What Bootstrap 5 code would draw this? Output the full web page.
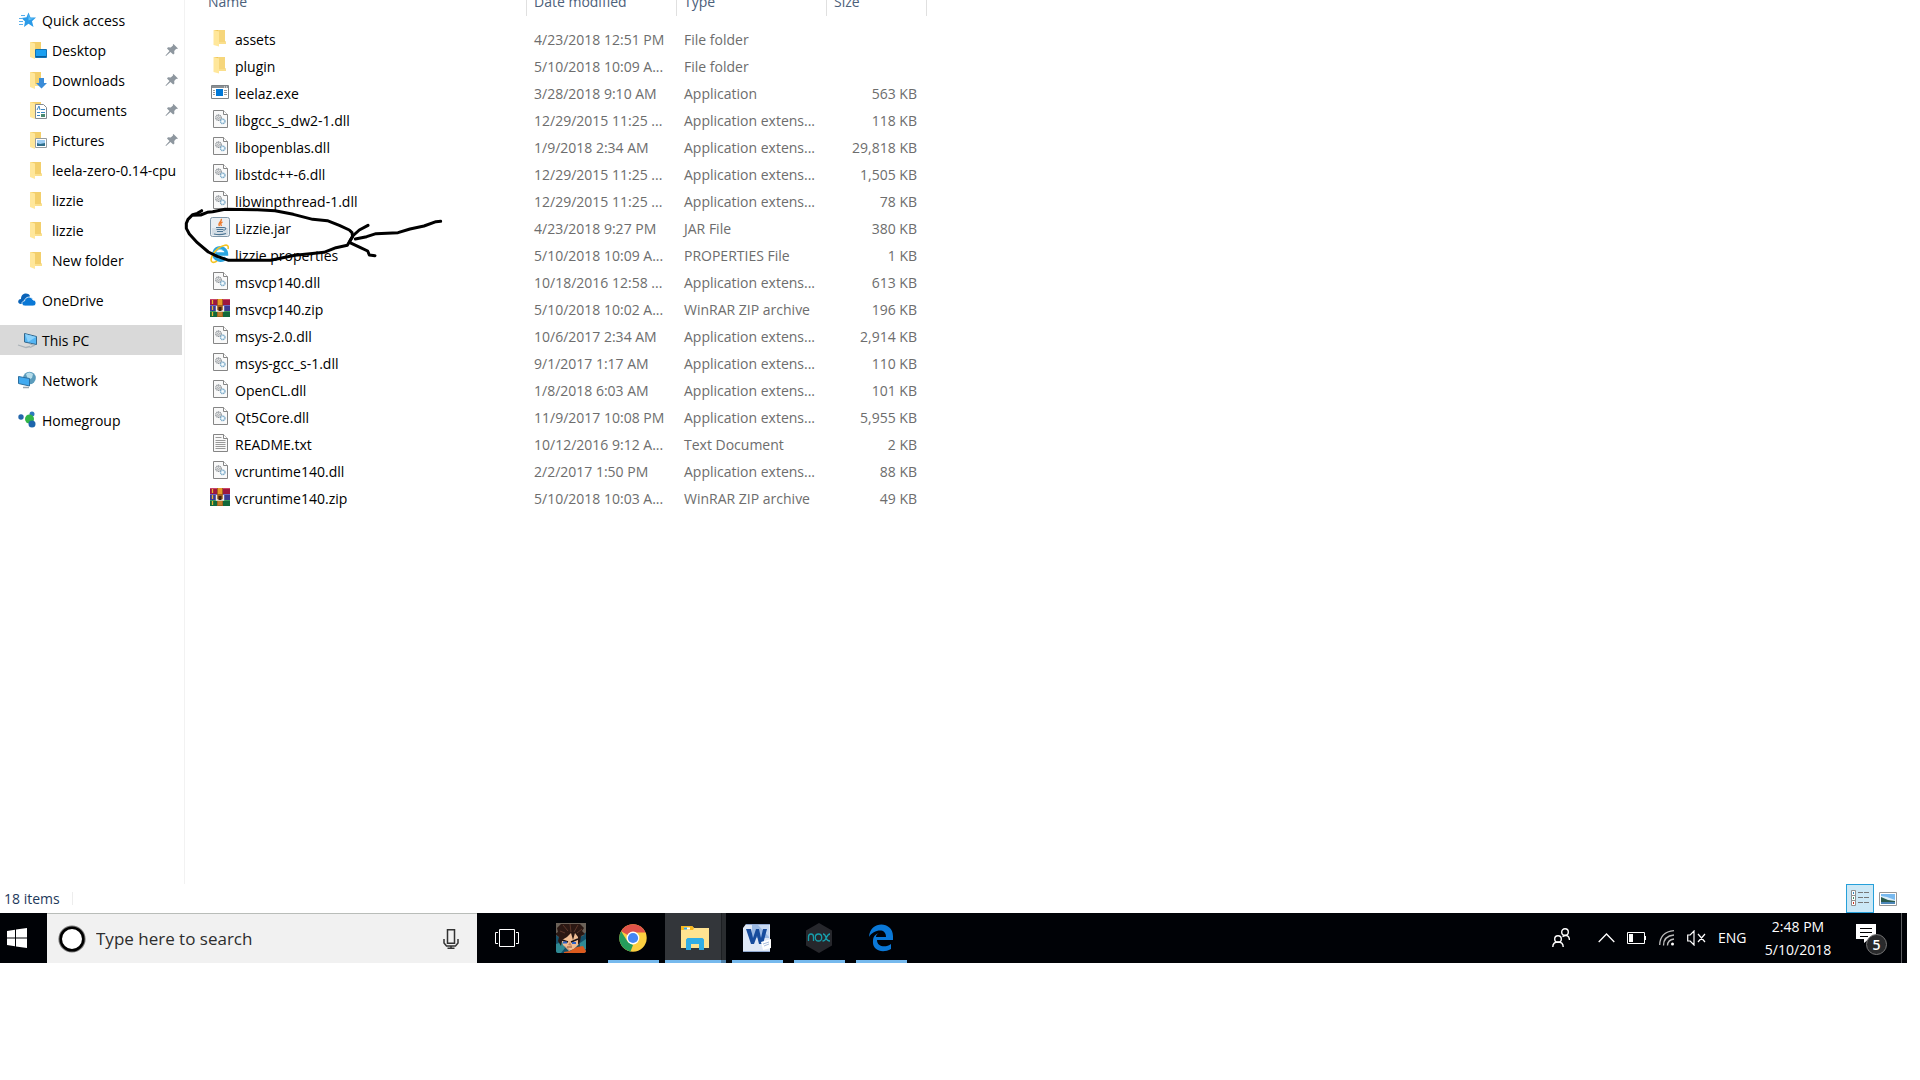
<!DOCTYPE html>
<html lang="en">
<head>
<meta charset="utf-8">
<meta name="viewport" content="width=device-width, initial-scale=1">
<title>File Explorer</title>
<link href="https://cdn.jsdelivr.net/npm/bootstrap@5.3.0/dist/css/bootstrap.min.css" rel="stylesheet">
<style>
  body { font-family: "Open Sans", "Noto Sans", sans-serif; font-size: 14px; line-height: 20px; color: #000; background: #fff; }
  .desktop { min-height: 100vh; padding: 0 13px 117px 0; }
  .side { width: 185px; padding-top: 5px; border-right: 1px solid #f2f2f2; }
  .side-link { height: 30px; width: 182px; padding-left: 18px; gap: 6px; color: #000; text-decoration: none; white-space: nowrap; overflow: hidden; }
  .side-link span { padding-top: 2px; }
  .side-link.nested { padding-left: 29px; gap: 5px; }
  .side-link.picked { background: #d9d9d9; }
  .side-group { margin-top: 10px; }
  .ic18 { width: 18px; height: 18px; flex: none; }
  .ic20 { width: 20px; height: 20px; flex: none; margin-bottom: 4px; }
  .pin { width: 14px; height: 14px; margin-left: auto; margin-right: 3px; flex: none; }
  .files { table-layout: fixed; width: 742px; border-collapse: separate; border-spacing: 0; }
  .files th { padding: 0; font-weight: 400; color: #4c607a; border-right: 1px solid #e0e0e0; }
  .head-text { height: 16px; overflow: hidden; padding: 0 0 4px 7px; }
  .c-name .head-text { padding-left: 23px; }
  .files tbody::before { content: ""; display: block; height: 10px; }
  .files td { height: 27px; padding: 0 0 0 7px; color: #6d6d6d; white-space: nowrap; }
  .files td:first-child { padding-left: 25px; color: #000; }
  .files td:last-child { padding-right: 10px; text-align: right; }
  .file-name { gap: 5px; }
  .c-name { width: 342px; } .c-mid { width: 150px; } .c-size { width: 100px; }
  .ink { position: absolute; left: 180px; top: 190px; width: 280px; height: 80px; pointer-events: none; }
  .status { height: 29px; padding: 0 5px 0 4px; color: #1e395b; }
  .status-rule { width: 1px; height: 13px; margin-left: 12px; background: #ededed; }
  .view-btn { width: 28px; height: 29px; padding: 0; border: 1px solid transparent; background: none; display: flex; align-items: center; justify-content: center; }
  .view-btn.on { background: #cce8f6; border-color: #26a0da; }
  .taskbar { height: 50px; background: #000206; color: #fff; }
  .tb { height: 50px; width: 62px; padding: 0; border: 0; background: none; color: #fff; display: flex; align-items: center; justify-content: center; flex: none; }
  .tb-start { width: 47px; padding-right: 13px; }
  .tb-view { width: 63px; padding-right: 3px; }
  .running { position: relative; }
  .running::after { content: ""; position: absolute; left: 6px; right: 5px; bottom: 0; height: 3px; background: #76b9ed; }
  .active-app { background: linear-gradient(90deg, transparent 0 1px, #33363a 1px 57px, #1c1f22 57px 58px, #2a2d30 58px); }
  .active-app::after { left: 1px; right: 0; background: linear-gradient(90deg, #76b9ed 0 56px, #4f82ab 56px); }
  .searchbox { width: 430px; height: 50px; background: #f1f1f1; border-top: 1px solid #b9bdb9; padding: 0 18px 0 11px; }
  .searchbox input { border: 0; background: none; outline: 0; font-size: 17px; line-height: 24px; padding: 0; margin-left: 10px; color: #222; }
  .searchbox input::placeholder { color: #2d2d2d; opacity: 1; }
  .mic { border: 0; background: none; padding: 0; display: flex; }
  .tray { gap: 12px; }
  .tray-btn { border: 0; background: none; padding: 0; color: #fff; display: flex; align-items: center; }
  .lang { width: 30px; }
  .clock { width: 76px; font-size: 14px; line-height: 23px; text-align: center; display: block; }
  .note { position: relative; width: 32px; height: 32px; margin-right: 13px; }
  .note-icon { position: absolute; left: 0; top: 2px; }
  .note-count { position: absolute; left: 10px; top: 12px; width: 21px; height: 21px; border-radius: 50%; border: 1px solid #777; background: #292a2c; font-size: 14px; font-weight: 600; line-height: 19px; text-align: center; }
  .peek { width: 6px; height: 50px; border: 0; border-left: 1px solid #5b5d60; background: none; padding: 0; }
</style>
<script src="https://cdn.jsdelivr.net/npm/bootstrap@5.3.0/dist/js/bootstrap.bundle.min.js"></script>
</head>
<body>
<svg width="0" height="0" class="position-absolute" aria-hidden="true">
  <symbol id="folder" viewBox="0 0 20 20"><path d="M4 2h11v11l1 1v2H7z" fill="#f0c75c"/><path d="M8 2h7v12h-7z" fill="#f6d67b"/><path d="M3.500 2L9 3.500V18.500L3.500 17z" fill="#ffe79b"/><path d="M9 14h7v2H9z" fill="#fadf8d"/></symbol>
  <symbol id="sfolder" viewBox="0 0 18 18"><path d="M1 1h11v11l1 1v2H5z" fill="#f3cf6c"/><path d="M1 1l5 1.500V18l-5-2z" fill="#ffe79b"/><path d="M6 13h7v2H6z" fill="#fadf8d"/></symbol>
  <symbol id="dll" viewBox="0 0 20 20"><path d="M3.500 1.500h10l4 4v13h-14z" fill="#f9f9f9" stroke="#858585"/><path d="M13.500 1.500v4h4" fill="#fff" stroke="#858585"/><circle cx="8.500" cy="8.700" r="2.700" fill="#eee" stroke="#8b9196" stroke-width="1.300" stroke-dasharray="1.200 .5"/><circle cx="8.500" cy="8.700" r="1" fill="none" stroke="#8b9196" stroke-width=".7"/><circle cx="12.700" cy="12.300" r="2.300" fill="#e3f1f9" stroke="#7aa7c5" stroke-width="1.300" stroke-dasharray="1.200 .5"/><circle cx="12.700" cy="12.300" r=".8" fill="#fff"/></symbol>
  <symbol id="txt" viewBox="0 0 20 20"><path d="M3.500 1.500h10l4 4v13h-14z" fill="#f9f9f9" stroke="#858585"/><path d="M13.500 1.500v4h4" fill="#fff" stroke="#858585"/><path d="M5.500 4.500h6M5.500 7.500h10M5.500 9.500h10M5.500 11.500h10M5.500 13.500h10M5.500 15.500h10" stroke="#999"/></symbol>
  <symbol id="exe" viewBox="0 0 20 20"><path d="M1.500 3.500h17v13h-17z" fill="#fff" stroke="#7d8286"/><path d="M2 4h16v2H2z" fill="#8b9094"/><path d="M14 5h1M16 5h1" stroke="#fff"/><path d="M3 8.500h2M3 10.500h2M3 12.500h2M14 8.500h3M14 10.500h3M14 12.500h3" stroke="#9a9a9a"/><path d="M6 7h7v7H6z" fill="#0078d7"/></symbol>
  <symbol id="jar" viewBox="0 0 20 20"><rect x=".5" y=".5" width="19" height="19" rx="2" fill="#e9eef2" stroke="#8097a9"/><path d="M2 11h16v7H2z" fill="#d3dde5"/><path d="M11 2c2 2-4 3.500-1.500 7M12.500 5c-2.500 1-2 2-1 4" fill="none" stroke="#ee7a2b" stroke-width="1.400"/><path d="M6 10.500h8M6.500 12.500h7M7 14.500h6M4 17q6 1.500 12-.5" fill="none" stroke="#4d7694" stroke-width="1.200"/><path d="M14 10.500q3 0 1.500 2l-2 1" fill="none" stroke="#4d7694"/></symbol>
  <symbol id="ie" viewBox="0 0 20 20"><path d="M15.500 13.500A6.300 6.300 0 1 1 16.500 10H6" fill="none" stroke="#2aa5e0" stroke-width="3.400"/><path d="M7 6.500q3-3 6 0" fill="none" stroke="#88d9f8"/><path d="M2 18C-1 15 5 4 14 1.500c3-1 5 0 4 3.500" fill="none" stroke="#f5c324" stroke-width="1.600"/><path d="M2 18q2 1 5-1" fill="none" stroke="#f5c324" stroke-width="1.600"/></symbol>
  <symbol id="rar" viewBox="0 0 20 20"><path d="M0 1h20v6H0z" fill="#9d1740"/><path d="M0 1h20v1H0z" fill="#c94467"/><path d="M0 7h20v6H0z" fill="#3b3a93"/><path d="M0 7h20v1H0z" fill="#6c66c0"/><path d="M0 13h20v6H0z" fill="#12683a"/><path d="M0 13h20v1H0z" fill="#3d9c5d"/><path d="M2.500 2v4M2.500 8v4M2.500 14v4" stroke="#e8b62f" stroke-width="1.300"/><path d="M7 1h6v18H7z" fill="#a3601f"/><path d="M8 1h4v6H8z" fill="#e99b28"/><path d="M6.500 8v5h7V8" fill="none" stroke="#eee" stroke-width="1.400"/><path d="M8.500 9h3v4h-3z" fill="#3a2115"/><path d="M8 15h4M8 17h4" stroke="#dd9c3b"/></symbol>
  <symbol id="pin" viewBox="0 0 14 14"><path d="M8.500 1l4.500 4.500-1.200.5-.6-.2-2 2.200.2 2.500-1.200 1L5.500 9 1 13l-.5-.5L4.500 8 2 5.500l1-1.200 2.700.2L8 2.500 7.800 1.800z" fill="#8e979f"/></symbol>
</svg>

<div class="desktop d-flex flex-column position-relative">
  <div class="d-flex flex-grow-1 align-items-stretch">
    <nav class="side flex-shrink-0" aria-label="Folders">
      <a href="#" class="side-link d-flex align-items-center"><svg class="ic18" viewBox="0 0 18 18"><path d="M10.500 1.500l2 5H18l-4 3.800 1.500 5.700-5-3.200L6 16l1-5.500L3.500 7l5-.8z" fill="#2b9be8"/><path d="M10.500 3l1.500 4.200 4 .3-5.500 2z" fill="#62c1f7"/><path d="M3 4.500h4M1 7.500h4M1 10.500h4M1 13.500h4" stroke="#58aeea"/></svg><span>Quick access</span></a>
      <a href="#" class="side-link nested d-flex align-items-center"><svg class="ic18" viewBox="0 0 18 18"><use href="#sfolder"/><path d="M6.500 8.500h11v8h-11z" fill="#1a9ff1" stroke="#1273b5"/><path d="M7 15h10v1H7z" fill="#0c5c99"/></svg><span>Desktop</span><svg class="pin"><use href="#pin"/></svg></a>
      <a href="#" class="side-link nested d-flex align-items-center"><svg class="ic18" viewBox="0 0 18 18"><use href="#sfolder"/><path d="M10 7h5v5h3l-5.500 5.500L7 12h3z" fill="#3a8cd8"/></svg><span>Downloads</span><svg class="pin"><use href="#pin"/></svg></a>
      <a href="#" class="side-link nested d-flex align-items-center"><svg class="ic18" viewBox="0 0 18 18"><use href="#sfolder"/><path d="M6.500 3.500h8l3 3v11h-11z" fill="#fff" stroke="#848a8f"/><path d="M8 9l2-4 1 4M12 8.500h4M8 11.500h3M12 11.500h4M8 14.500h3" fill="none" stroke="#3b86c2"/><path d="M12 13h4v3h-4z" fill="#4a8a70"/></svg><span>Documents</span><svg class="pin"><use href="#pin"/></svg></a>
      <a href="#" class="side-link nested d-flex align-items-center"><svg class="ic18" viewBox="0 0 18 18"><use href="#sfolder"/><path d="M6.500 7.500h11v9h-11z" fill="#fff" stroke="#969ca0"/><path d="M8 9h8v6H8z" fill="#9cccf3"/><path d="M8 12l3 1 5-1v3H8z" fill="#316f8b"/></svg><span>Pictures</span><svg class="pin"><use href="#pin"/></svg></a>
      <a href="#" class="side-link nested d-flex align-items-center"><svg class="ic18"><use href="#sfolder"/></svg><span>leela-zero-0.14-cpu</span></a>
      <a href="#" class="side-link nested d-flex align-items-center"><svg class="ic18"><use href="#sfolder"/></svg><span>lizzie</span></a>
      <a href="#" class="side-link nested d-flex align-items-center"><svg class="ic18"><use href="#sfolder"/></svg><span>lizzie</span></a>
      <a href="#" class="side-link nested d-flex align-items-center"><svg class="ic18"><use href="#sfolder"/></svg><span>New folder</span></a>
      <a href="#" class="side-link side-group d-flex align-items-center"><svg class="ic18" viewBox="0 0 18 18"><path d="M3 13C-1 13-.5 8 3 8c0-6 7-7 9-3L7 13z" fill="#0a63b8"/><path d="M7 15c-4 0-4-5-.5-5 .5-4.500 7-5.500 8.500-1 4 0 4 6 0 6z" fill="#0a78d6" stroke="#fff" stroke-width=".8"/></svg><span>OneDrive</span></a>
      <a href="#" class="side-link side-group picked d-flex align-items-center"><svg class="ic18" viewBox="0 0 18 18" overflow="visible"><path d="M6.500 2.500l12 3v8l-12-2.500z" fill="#55b5f3" stroke="#34688d"/><path d="M7 3l11 3-8 5z" fill="#8cd2fb"/><path d="M0 14l8 2.500 4-1M12 13l4 1.500-4 2" fill="none" stroke="#aab2b8" stroke-width="1.300"/></svg><span>This PC</span></a>
      <a href="#" class="side-link side-group d-flex align-items-center"><svg class="ic18" viewBox="0 0 18 18"><circle cx="11.500" cy="7" r="6.300" fill="#5b9cbc"/><path d="M8 3q3-3 7 0l-1 4-4 2z" fill="#b5dcea"/><path d="M.5 5.500l11 2v7.500l-11-2.500z" fill="#41aaf0" stroke="#2b6e9f"/><path d="M5 16.500h6" stroke="#9aa5ad" stroke-width="1.500"/></svg><span>Network</span></a>
      <a href="#" class="side-link side-group d-flex align-items-center"><svg class="ic18" viewBox="0 0 18 18"><circle cx="3" cy="6" r="2.700" fill="#2467ac"/><circle cx="14" cy="3" r="2.500" fill="#2c78bd"/><circle cx="11.500" cy="8" r="4.500" fill="#32b548"/><circle cx="14" cy="13" r="3.500" fill="#1d65ac"/></svg><span>Homegroup</span></a>
    </nav>
    <main class="flex-grow-1">
      <table class="files">
        <thead><tr><th class="c-name"><div class="head-text d-flex align-items-end">Name</div></th><th class="c-mid"><div class="head-text d-flex align-items-end">Date modified</div></th><th class="c-mid"><div class="head-text d-flex align-items-end">Type</div></th><th class="c-size"><div class="head-text d-flex align-items-end">Size</div></th></tr></thead>
        <tbody>
          <tr><td><div class="file-name d-flex align-items-center"><svg class="ic20"><use href="#folder"/></svg><span>assets</span></div></td><td>4/23/2018 12:51 PM</td><td>File folder</td><td></td></tr>
          <tr><td><div class="file-name d-flex align-items-center"><svg class="ic20"><use href="#folder"/></svg><span>plugin</span></div></td><td>5/10/2018 10:09 A...</td><td>File folder</td><td></td></tr>
          <tr><td><div class="file-name d-flex align-items-center"><svg class="ic20"><use href="#exe"/></svg><span>leelaz.exe</span></div></td><td>3/28/2018 9:10 AM</td><td>Application</td><td>563 KB</td></tr>
          <tr><td><div class="file-name d-flex align-items-center"><svg class="ic20"><use href="#dll"/></svg><span>libgcc_s_dw2-1.dll</span></div></td><td>12/29/2015 11:25 ...</td><td>Application extens...</td><td>118 KB</td></tr>
          <tr><td><div class="file-name d-flex align-items-center"><svg class="ic20"><use href="#dll"/></svg><span>libopenblas.dll</span></div></td><td>1/9/2018 2:34 AM</td><td>Application extens...</td><td>29,818 KB</td></tr>
          <tr><td><div class="file-name d-flex align-items-center"><svg class="ic20"><use href="#dll"/></svg><span>libstdc++-6.dll</span></div></td><td>12/29/2015 11:25 ...</td><td>Application extens...</td><td>1,505 KB</td></tr>
          <tr><td><div class="file-name d-flex align-items-center"><svg class="ic20"><use href="#dll"/></svg><span>libwinpthread-1.dll</span></div></td><td>12/29/2015 11:25 ...</td><td>Application extens...</td><td>78 KB</td></tr>
          <tr><td><div class="file-name d-flex align-items-center"><svg class="ic20"><use href="#jar"/></svg><span>Lizzie.jar</span></div></td><td>4/23/2018 9:27 PM</td><td>JAR File</td><td>380 KB</td></tr>
          <tr><td><div class="file-name d-flex align-items-center"><svg class="ic20"><use href="#ie"/></svg><span>lizzie.properties</span></div></td><td>5/10/2018 10:09 A...</td><td>PROPERTIES File</td><td>1 KB</td></tr>
          <tr><td><div class="file-name d-flex align-items-center"><svg class="ic20"><use href="#dll"/></svg><span>msvcp140.dll</span></div></td><td>10/18/2016 12:58 ...</td><td>Application extens...</td><td>613 KB</td></tr>
          <tr><td><div class="file-name d-flex align-items-center"><svg class="ic20"><use href="#rar"/></svg><span>msvcp140.zip</span></div></td><td>5/10/2018 10:02 A...</td><td>WinRAR ZIP archive</td><td>196 KB</td></tr>
          <tr><td><div class="file-name d-flex align-items-center"><svg class="ic20"><use href="#dll"/></svg><span>msys-2.0.dll</span></div></td><td>10/6/2017 2:34 AM</td><td>Application extens...</td><td>2,914 KB</td></tr>
          <tr><td><div class="file-name d-flex align-items-center"><svg class="ic20"><use href="#dll"/></svg><span>msys-gcc_s-1.dll</span></div></td><td>9/1/2017 1:17 AM</td><td>Application extens...</td><td>110 KB</td></tr>
          <tr><td><div class="file-name d-flex align-items-center"><svg class="ic20"><use href="#dll"/></svg><span>OpenCL.dll</span></div></td><td>1/8/2018 6:03 AM</td><td>Application extens...</td><td>101 KB</td></tr>
          <tr><td><div class="file-name d-flex align-items-center"><svg class="ic20"><use href="#dll"/></svg><span>Qt5Core.dll</span></div></td><td>11/9/2017 10:08 PM</td><td>Application extens...</td><td>5,955 KB</td></tr>
          <tr><td><div class="file-name d-flex align-items-center"><svg class="ic20"><use href="#txt"/></svg><span>README.txt</span></div></td><td>10/12/2016 9:12 A...</td><td>Text Document</td><td>2 KB</td></tr>
          <tr><td><div class="file-name d-flex align-items-center"><svg class="ic20"><use href="#dll"/></svg><span>vcruntime140.dll</span></div></td><td>2/2/2017 1:50 PM</td><td>Application extens...</td><td>88 KB</td></tr>
          <tr><td><div class="file-name d-flex align-items-center"><svg class="ic20"><use href="#rar"/></svg><span>vcruntime140.zip</span></div></td><td>5/10/2018 10:03 A...</td><td>WinRAR ZIP archive</td><td>49 KB</td></tr>
        </tbody>
      </table>
    </main>
  </div>

  <!-- hand-drawn circle and arrow over Lizzie.jar -->
  <svg class="ink" viewBox="0 0 840 240" fill="none" stroke="#000" stroke-width="9" stroke-linecap="round" stroke-linejoin="round">
    <path d="M65 62L52 70 38 74 24 88 19 100 19 115 28 132 52 158 85 186 112 199 146 211H272L308 203 345 196 390 191 432 187 468 173 502 166 510 152 518 140 516 128 508 120 478 106 442 92 398 88 340 73 285 62 232 59 135 58 98 65 82 67 62 75 36 76"/>
    <path d="M782 94L768 95 732 108 690 117 654 128 588 131 560 140 526 147"/>
    <path d="M564 106L538 120 518 138 508 157 540 172 563 183 568 195 585 197"/>
  </svg>

  <div class="status d-flex align-items-center">
    <span>18 items</span><span class="status-rule"></span>
    <div class="d-flex ms-auto">
      <button type="button" class="view-btn on" aria-label="Details view"><svg width="20" height="17" viewBox="0 0 20 17"><path d="M1.500.5h4v5h-4zM1.500 5.500h4v5h-4zM1.500 10.500h4v5h-4z" fill="#fff" stroke="#8f8f8f"/><path d="M3 2h1v2H3z" fill="#3588c0"/><path d="M3 7h1v2H3z" fill="#3f8f68"/><path d="M3 12h1v2H3z" fill="#d0301c"/><path d="M8 2.500h5M14 2.500h5M8 7.500h5M14 7.500h5M8 12.500h5M14 12.500h5" stroke="#777"/></svg></button>
      <button type="button" class="view-btn" aria-label="Large icons view"><svg width="18" height="14" viewBox="0 0 18 14"><path d="M.5.5h17v13H.5z" fill="#fff" stroke="#969696"/><path d="M2 2h14v10H2z" fill="#78b9ef"/><path d="M2 4l6 1 8 3v2H2z" fill="#dceef8"/><path d="M2 5l7 3 7 1v1H2z" fill="#2b5b4d"/><path d="M2 10h14v2H2z" fill="#4c86b8"/></svg></button>
    </div>
  </div>

  <footer class="taskbar d-flex align-items-center">
    <button type="button" class="tb tb-start" aria-label="Start"><svg width="20" height="20" viewBox="0 0 20 20" fill="#fff"><path d="M0 3l8-1.200V9.500H0zM9 1.600L20 0v9.500H9zM0 10.500h8v7.700L0 17zM9 10.500h11V20L9 18.400z"/></svg></button>
    <div class="searchbox d-flex align-items-center flex-shrink-0">
      <svg width="28" height="28" viewBox="0 0 28 28"><circle cx="14" cy="14" r="12.300" fill="#fff" stroke="#777" stroke-width="2.600"/><circle cx="14" cy="14" r="11.300" fill="none" stroke="#000" stroke-width="2.600"/></svg>
      <input type="text" class="flex-grow-1" placeholder="Type here to search" aria-label="Search">
      <button type="button" class="mic" aria-label="Voice search"><svg width="16" height="20" viewBox="0 0 16 20" fill="none" stroke="#333" stroke-width="1.500"><path d="M4.500.8h7v13.500h-7z"/><path d="M1 10v4l2.500 3h9l2.500-3v-4M8 17v2M4.500 19.200h7"/></svg></button>
    </div>
    <button type="button" class="tb tb-view" aria-label="Task view"><svg width="24" height="18" viewBox="0 0 24 18" fill="none" stroke="#fff"><path d="M4.500.5h15v17h-15zM3 3.500H.5v11H3M21 3.500h2.500v11H21"/></svg></button>
    <button type="button" class="tb" aria-label="Game"><svg width="30" height="30" viewBox="0 0 30 30"><rect width="30" height="30" rx="3" fill="#14506a"/><path d="M0 0h30v9l-3 4-22 3-5-4z" fill="#6b6258"/><path d="M0 21l6-2 3 6-4 5H2q-2 0-2-2zM24 20l6-4v10l-6 1z" fill="#2f8a94"/><path d="M5 15l4-5 12-1 3 5-1 7-5 5-5 2-6-6z" fill="#f0bd93"/><path d="M14 19l2 4-4-1zM8 22l5 4 1 2z" fill="#c58560"/><path d="M1 5L5 1h19l4 4-2 3 3 3-4 2-1 6-2 3 0-8-3-4-2 7-2-7-4 4-5 3-1 6-3-5 1-4-4-3 3-2z" fill="#2b1813"/><path d="M7 2l5 6M14 1l1 8M22 2l-4 7M26 6l-5 4M4 8l5 2" stroke="#5d372a"/><path d="M6 17l6 2M15 19l7-3" stroke="#1c1212" stroke-width="1.500"/><path d="M7 18.500h4v2H7zM16 19h4v2h-4z" fill="#2e62c8"/><path d="M8 29l6-1 7-4 6-1 3 5q0 2-3 2H8z" fill="#dc5b1e"/><path d="M11 24h5" stroke="#8d4a2c"/></svg></button>
    <button type="button" class="tb running" aria-label="Chrome"><svg width="28" height="28" viewBox="0 0 28 28"><circle cx="14" cy="14" r="13.700" fill="#fccf40"/><path d="M14 14L2.130 7.150A13.700 13.700 0 0 1 25.860 7.150L26.500 8.500H14z" fill="#df5349"/><path d="M2.130 7.150L8.500 17.500 14 21 11.500 27.500A13.700 13.700 0 0 1 2.130 7.150z" fill="#259d5c"/><circle cx="14" cy="14" r="6.400" fill="#fff"/><circle cx="14" cy="14" r="5.100" fill="#4587f3"/></svg></button>
    <button type="button" class="tb running active-app" aria-label="File Explorer"><svg width="28" height="24" viewBox="0 0 28 24"><path d="M0 0h11l2 2h15v20H0z" fill="#ffe391"/><path d="M0 0h11l2 2-1 2H0z" fill="#f8b91f"/><path d="M3 1.500h6v2H3z" fill="#fff"/><path d="M3 1.500h3v2H3z" fill="#36a7dc"/><path d="M5 24V13.500L6.500 12h15l1.500 1.500V24h-5v-6h-8v6z" fill="#31ade6"/></svg></button>
    <button type="button" class="tb running" aria-label="Word"><svg width="28" height="28" viewBox="0 0 28 28"><path d="M3 0h24v28H0V4z" fill="#dfe8f6"/><path d="M9 1h17v13H9z" fill="#9bb9e3"/><path d="M15 1h11v12z" fill="#c7d9f2"/><path d="M3 0h24v1H3zM0 27h27v1H0z" fill="#91a9d0"/><path d="M3 5h5l2 9 3-9h3l2 9 2-9h4l-4 15h-4l-2-8-3 8H8z" fill="#174c9d"/><path d="M18 18l10-3v9l-8 2z" fill="#fff"/><path d="M20 20l6-2M21 22l5-2" stroke="#a9bddc"/></svg></button>
    <button type="button" class="tb running" aria-label="Nox"><svg width="26" height="30" viewBox="0 0 26 30"><path d="M13 0l13 7.500v15L13 30 0 22.500v-15z" fill="#26272c"/><path d="M2.500 18v-4q0-3 2.500-3t2.500 3v4M17 11q2 0 3 3.500t4 3.500M24 11q-2 0-3.500 3.500T16.500 18" fill="none" stroke="#179eab" stroke-width="1.300"/><ellipse cx="12.500" cy="14.500" rx="3.200" ry="3.500" fill="none" stroke="#179eab" stroke-width="1.300"/></svg></button>
    <button type="button" class="tb running" aria-label="Edge"><svg width="26" height="28" viewBox="0 0 26 28"><path d="M1 13C2-4 25-3 25 12v4H9c0 7 9 8 14 4v5C14 30 4 26 5 17c0-5 3-7 6-8-2 1-3 2-3 4h10c0-10-13-7-17 0z" fill="#0a78d7"/></svg></button>

    <div class="tray d-flex align-items-center ms-auto">
      <button type="button" class="tray-btn me-3" aria-label="People"><svg width="18" height="20" viewBox="0 0 18 20" fill="none" stroke="#fff" stroke-width="1.400"><circle cx="13" cy="4" r="3.300"/><circle cx="6" cy="11" r="3.300"/><path d="M.8 19q0-5 5.200-5t5.200 5M10.500 8.500q6.500-3 7 3.500"/></svg></button>
      <button type="button" class="tray-btn" aria-label="Show hidden icons"><svg width="17" height="10" viewBox="0 0 17 10" fill="none" stroke="#fff" stroke-width="1.300"><path d="M.7 9l7.800-8 7.800 8"/></svg></button>
      <button type="button" class="tray-btn" aria-label="Battery"><svg width="20" height="12" viewBox="0 0 20 12"><path d="M.5.5h17v11H.5zM18.500 4v4" fill="none" stroke="#fff"/><path d="M2 2h4v8H2z" fill="#fff"/></svg></button>
      <button type="button" class="tray-btn" aria-label="Wi-Fi"><svg width="16" height="16" viewBox="0 0 16 16" fill="none" stroke="#bbb" stroke-width="1.300"><path d="M.7 15Q1 2 15 .7M4.500 15.500Q4.500 6 15 5M8.500 15.500Q8.500 10 15 9"/><circle cx="13.500" cy="14" r="1.500" fill="#fff" stroke="none"/></svg></button>
      <button type="button" class="tray-btn" aria-label="Volume muted"><svg width="19" height="16" viewBox="0 0 19 16" fill="none" stroke="#fff" stroke-width="1.200"><path d="M.7 5v6h2.500L7 15V1L3.200 5zM11 4l7 8M18 4l-7 8"/></svg></button>
      <button type="button" class="tray-btn lang">ENG</button>
      <button type="button" class="tray-btn clock">2:48 PM<br>5/10/2018</button>
      <button type="button" class="tray-btn ms-2 note" aria-label="5 notifications"><svg width="20" height="20" viewBox="0 0 20 20" class="note-icon"><path d="M0 0h20v15h-7l-5 4v-4H0z" fill="#fff"/><path d="M4 4.500h12M4 8.500h12M4 12.500h8" stroke="#000"/></svg><span class="note-count">5</span></button>
    </div>
    <button type="button" class="peek" aria-label="Show desktop"></button>
  </footer>
</div>
</body>
</html>
